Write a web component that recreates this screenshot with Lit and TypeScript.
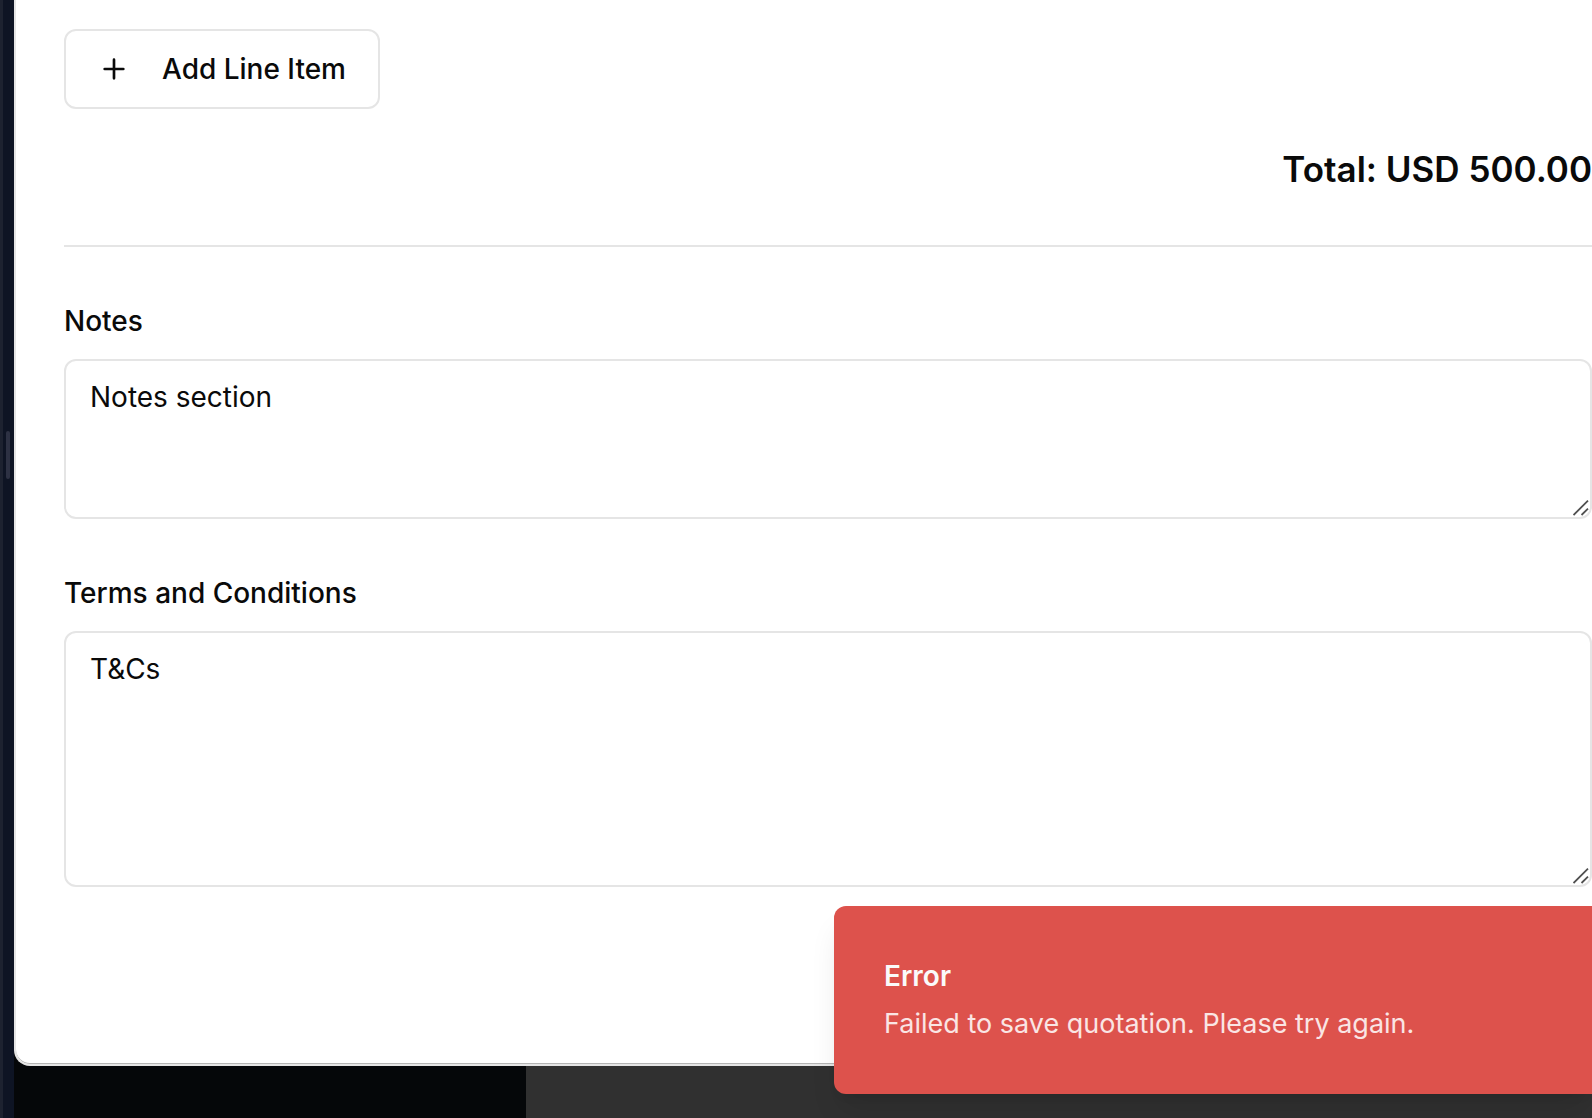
import { LitElement, html, css, svg } from "lit";
import { customElement, property } from "lit/decorators.js";

@customElement("note-field")
export class NoteField extends LitElement {
  @property() label = "";
  @property() value = "";
  @property() size: "short" | "tall" = "short";

  static styles = css`
    :host {
      display: block;
    }
    .field {
      display: flex;
      flex-direction: column;
      gap: 16px;
    }
    .label {
      font-size: 28px;
      font-weight: 500;
      line-height: 44px;
    }
    .box {
      position: relative;
      display: grid;
    }
    .area {
      box-sizing: border-box;
      width: 100%;
      margin: 0;
      padding: 16px 24px;
      border: 2px solid #e5e5e5;
      border-radius: 12px;
      background: #fff;
      color: inherit;
      font: inherit;
      font-size: 28px;
      line-height: 40px;
      resize: vertical;
      outline: none;
    }
    .area::-webkit-resizer {
      background: transparent;
    }
    .short {
      height: 160px;
    }
    .tall {
      height: 256px;
    }
    .grip {
      position: absolute;
      right: 3px;
      bottom: 3px;
      width: 16px;
      height: 16px;
      pointer-events: none;
    }
  `;

  render() {
    return html`
      <div class="field">
        <label class="label" for="area">${this.label}</label>
        <div class="box">
          <textarea id="area" class="area ${this.size}" .value=${this.value}></textarea>
          <svg class="grip" viewBox="0 0 16 16" fill="none" stroke="#505050" stroke-width="1.8" aria-hidden="true">
            <path d="M.5 15 15 .7M8.5 15 15 8.7" />
          </svg>
        </div>
      </div>
    `;
  }
}

const plusIcon = svg`<path d="M5 12h14M12 5v14" />`;

@customElement("app-root")
export class AppRoot extends LitElement {
  static styles = css`
    :host {
      display: block;
      color: #0a0a0a;
      font-family: Inter, "Liberation Sans", sans-serif;
    }
    .shell {
      position: relative;
      display: flex;
      min-height: 100vh;
      overflow: hidden;
      background: #050709;
    }
    .rail {
      box-sizing: border-box;
      flex: none;
      width: 14px;
      padding: 431px 0 0 3px;
      border-left: 3px solid #1d2230;
      background: #0e1424;
    }
    .handle {
      width: 4px;
      height: 48px;
      border-radius: 2px;
      background: #2d3143;
    }
    .main {
      flex: 1;
      min-width: 0;
      display: flex;
      flex-direction: column;
    }
    .dialog {
      flex: 1;
      padding: 29px 0 0 48px;
      border: solid #e5e5e5;
      border-width: 0 0 2px 2px;
      border-bottom-left-radius: 16px;
      background: #fff;
      box-shadow: inset 0 -1px 0 #b4b4b4;
    }
    .add {
      display: inline-flex;
      align-items: center;
      gap: 32px;
      box-sizing: border-box;
      height: 80px;
      padding: 0 32px;
      border: 2px solid #e5e5e5;
      border-radius: 12px;
      background: #fff;
      color: inherit;
      font: inherit;
      font-size: 28px;
      font-weight: 500;
      line-height: 40px;
    }
    .icon {
      width: 32px;
      height: 32px;
    }
    .total {
      margin: 32px 0 48px;
      font-size: 35px;
      font-weight: 600;
      line-height: 56px;
      text-align: right;
    }
    .fields {
      display: flex;
      flex-direction: column;
      gap: 52px;
      padding-top: 52px;
      border-top: 2px solid #e5e5e5;
    }
    .backdrop {
      height: 52px;
      margin-left: 512px;
      background: #303030;
    }
    .toast {
      position: absolute;
      right: 0;
      bottom: 24px;
      box-sizing: border-box;
      width: 758px;
      padding: 50px;
      border-radius: 12px 0 0 12px;
      background: #dd524c;
      color: #fafafa;
      font-size: 28px;
      line-height: 40px;
      box-shadow: 0 20px 30px -6px rgba(0, 0, 0, 0.1), 0 8px 12px -8px rgba(0, 0, 0, 0.1);
    }
    .title {
      margin: 0 0 8px;
      font-weight: 600;
    }
    .message {
      margin: 0;
      color: #fae5e4;
      font-size: 27px;
    }
  `;

  render() {
    return html`
      <div class="shell">
        <div class="rail"><div class="handle"></div></div>
        <div class="main">
          <section class="dialog">
            <button class="add" type="button">
              <svg class="icon" viewBox="0 0 24 24" fill="none" stroke="currentColor" stroke-width="2" stroke-linecap="round" aria-hidden="true">
                ${plusIcon}
              </svg>
              Add Line Item
            </button>
            <div class="total">Total: USD 500.00</div>
            <div class="fields">
              <note-field label="Notes" value="Notes section"></note-field>
              <note-field label="Terms and Conditions" value="T&amp;Cs" size="tall"></note-field>
            </div>
          </section>
          <div class="backdrop"></div>
        </div>
        <div class="toast" role="alert">
          <p class="title">Error</p>
          <p class="message">Failed to save quotation. Please try again.</p>
        </div>
      </div>
    `;
  }
}
